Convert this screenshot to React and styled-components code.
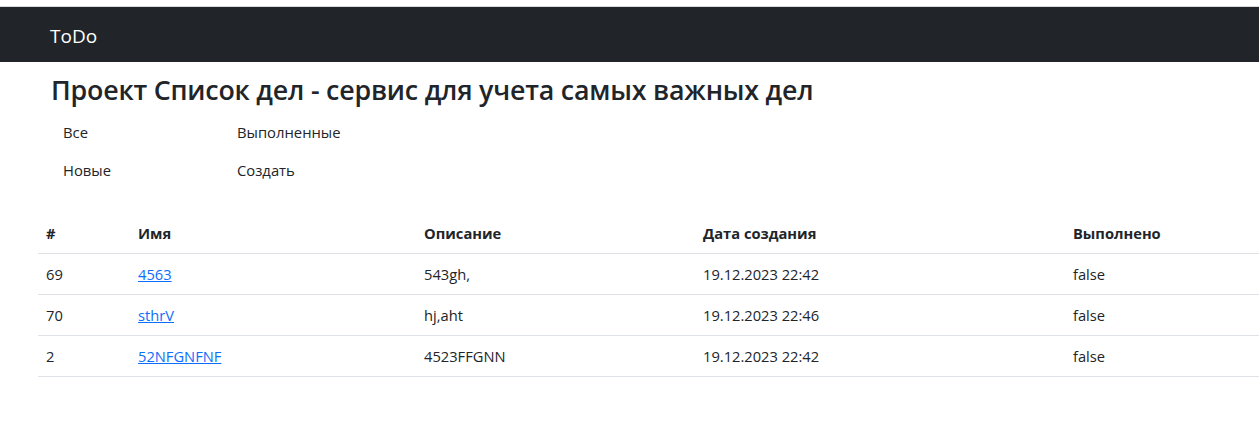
import React from 'react';
import styled, { createGlobalStyle } from 'styled-components';

const GlobalStyle = createGlobalStyle`
    body {
        margin: 0;
        padding-top: 6px;
        background: #fff;
        color: #212529;
        font-family: 'Open Sans', 'Noto Sans', sans-serif;
        font-size: 15px;
        overflow: hidden;
    }
`

const NavBar = styled.nav`
    height: 55px;
    border-top: 1px solid #dadada;
    background-color: #212529;
    display: flex;
    align-items: center;
    padding-left: 50px;
`

const Brand = styled.a`
    color: #fff;
    font-size: 19px;
    text-decoration: none;
    padding-top: 2px;
`

const Main = styled.main`
    padding: 11px 0 0 38px;
`

const Title = styled.h3`
    margin: 0 0 0 13px;
    font-size: 26.8px;
    font-weight: 600;
    line-height: 34px;
    letter-spacing: -0.2px;
`

const Menu = styled.ul`
    list-style: none;
    margin: 6px 0 0 25px;
    padding: 0;
    display: grid;
    grid-template-columns: 174px 200px;
    grid-auto-rows: 38px;
    align-items: center;
`

const MenuItem = styled.li`
    font-size: 14.8px;
`

const Table = styled.table`
    margin-top: 24px;
    width: calc(100vw - 38px);
    border-collapse: collapse;
    table-layout: fixed;
    font-size: 14.7px;
`

const Th = styled.th`
    width: ${props => props.w ? props.w + 'px' : 'auto'};
    text-align: left;
    font-weight: 700;
    padding: 0 8px;
    height: 40px;
    border-bottom: 1px solid #dee2e6;
`

const Td = styled.td`
    padding: 0 8px;
    height: 40px;
    border-bottom: 1px solid #dee2e6;
`

const Link = styled.a`
    color: #0d6efd;
    text-decoration: underline;
`

const tasks = [
    {id: 69, name: '4563', descr: '543gh,', date: '19.12.2023 22:42', done: 'false'},
    {id: 70, name: 'sthrV', descr: 'hj,aht', date: '19.12.2023 22:46', done: 'false'},
    {id: 2, name: '52NFGNFNF', descr: '4523FFGNN', date: '19.12.2023 22:42', done: 'false'},
]

const App = () => {
    return (
        <>
            <GlobalStyle/>
            <NavBar>
                <Brand href='#'>ToDo</Brand>
            </NavBar>
            <Main>
                <Title>Проект Список дел - сервис для учета самых важных дел</Title>
                <Menu>
                    <MenuItem>Все</MenuItem>
                    <MenuItem>Выполненные</MenuItem>
                    <MenuItem>Новые</MenuItem>
                    <MenuItem>Создать</MenuItem>
                </Menu>
                <Table>
                    <thead>
                        <tr>
                            <Th w={76}>#</Th>
                            <Th w={270}>Имя</Th>
                            <Th w={263}>Описание</Th>
                            <Th w={354}>Дата создания</Th>
                            <Th>Выполнено</Th>
                        </tr>
                    </thead>
                    <tbody>
                    {tasks.map(task => (
                        <tr key={task.id}>
                            <Td>{task.id}</Td>
                            <Td><Link href='#'>{task.name}</Link></Td>
                            <Td>{task.descr}</Td>
                            <Td>{task.date}</Td>
                            <Td>{task.done}</Td>
                        </tr>
                    ))}
                    </tbody>
                </Table>
            </Main>
        </>
    )
}

export default App;
